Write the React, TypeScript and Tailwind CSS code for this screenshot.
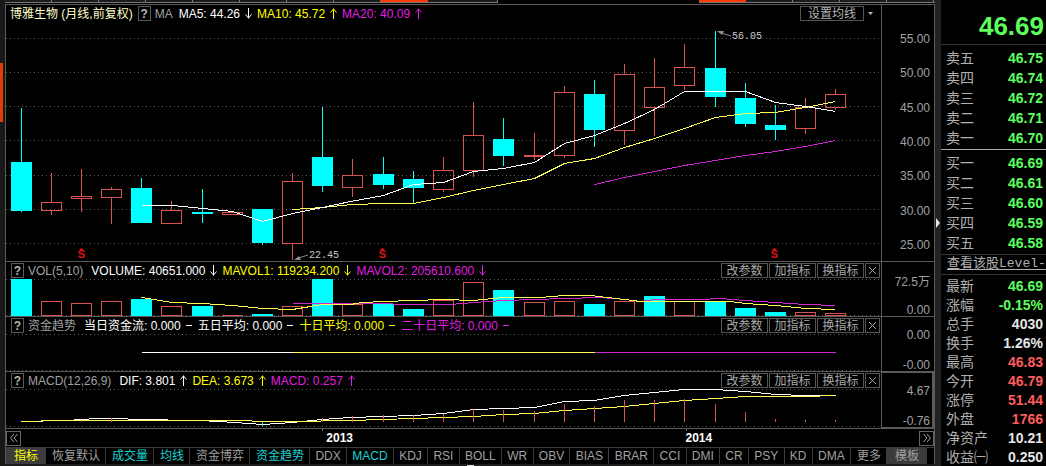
import type { ReactNode } from "react";

type Bar = {
  x: number;
  high: number;
  top: number;
  bottom: number;
  low: number;
  up: boolean;
  vol: number;
  volUp: boolean;
};

const RED = "#d9534f";
const CYAN = "#00ffff";
const WHITE = "#ffffff";
const YELLOW = "#ffff54";
const PURPLE = "#d028d0";

const PLOT_LEFT = 6;
const PLOT_WIDTH = 875;

const pct = (x: number) => `${((x - PLOT_LEFT) / PLOT_WIDTH) * 100}%`;

// x, high, body top, body bottom, low, up, volume top, volume up
const raw: [number, number, number, number, number, number, number, number][] = [
  [21, 108, 162, 211, 212, 0, 279, 0],
  [51, 173, 202, 211, 215, 1, 301, 1],
  [81, 169, 196, 199, 212, 1, 303, 1],
  [111, 187, 189, 198, 224, 1, 301, 1],
  [141, 178, 188, 223, 223, 0, 299, 0],
  [171, 201, 210, 224, 224, 1, 306, 1],
  [202, 189, 212, 214, 223, 0, 306, 0],
  [232, 212, 212, 215, 215, 1, 315, 1],
  [262, 209, 209, 243, 245, 0, 314, 0],
  [292, 173, 181, 244, 260, 1, 306, 1],
  [322, 107, 157, 186, 192, 0, 279, 0],
  [352, 159, 175, 188, 197, 1, 304, 1],
  [383, 157, 174, 185, 189, 0, 304, 0],
  [413, 171, 179, 188, 203, 0, 309, 0],
  [443, 157, 170, 190, 192, 1, 300, 1],
  [473, 102, 135, 171, 177, 1, 282, 1],
  [503, 118, 139, 156, 166, 0, 290, 0],
  [534, 133, 155, 157, 160, 1, 302, 1],
  [564, 86, 92, 156, 158, 1, 301, 1],
  [594, 80, 94, 130, 147, 0, 304, 0],
  [624, 64, 74, 131, 145, 1, 301, 1],
  [654, 58, 87, 108, 136, 1, 296, 0],
  [684, 44, 67, 86, 90, 1, 301, 1],
  [715, 31, 68, 97, 107, 0, 302, 0],
  [745, 83, 98, 124, 127, 0, 308, 0],
  [775, 105, 125, 130, 140, 0, 312, 0],
  [805, 98, 107, 129, 134, 1, 312, 1],
  [835, 89, 94, 108, 110, 1, 313, 1],
];

const bars: Bar[] = raw.map(([x, high, top, bottom, low, up, vol, volUp]) => ({
  x,
  high,
  top,
  bottom,
  low,
  up: up === 1,
  vol,
  volUp: volUp === 1,
}));

const ma5 =
  "141,205 172,205 202,208 232,211 247,216 262,221 292,213 322,207 350,201 383,195 413,184 443,182 473,171 503,168 534,162 564,143 594,135 624,123 654,109 684,91 745,91 775,102 805,106 835,111";
const ma10 =
  "292,209 322,207 352,204 383,203 413,203 443,197 473,190 503,184 534,178 564,163 594,158 624,147 654,138 684,128 715,117 745,113 775,112 805,107 835,101";
const ma20 = "594,184 624,177 654,171 684,165 715,160 745,155 775,151 805,146 835,140";

const mavol1 =
  "141,297 171,302 202,303 232,305 262,308 292,309 322,304 350,304 362,302 383,301 413,300 443,299 473,300 503,297 540,297 564,295 590,295 624,299 640,301 684,301 730,301 745,303 775,305 805,308 835,309";
const mavol2 =
  "292,303 385,303 400,304 450,304 473,302 503,300 534,299 564,298 600,297 624,299 640,301 654,299 700,299 720,298 745,300 775,302 805,304 835,305";

const dif =
  "21,421 66,420 96,418 120,418 134,419 200,420 235,422 262,424 292,422 322,419 350,417 413,415 443,413 473,409 534,407 564,401 594,400 624,395 654,392 684,389 715,389 745,391 775,394 805,395 835,395";
const dea =
  "21,421 60,420 240,420 262,421 292,421 350,420 413,418 473,416 503,414 534,413 564,410 594,408 624,406 654,403 684,400 715,398 745,396 805,396 835,395";

const macdBars: [number, number][] = [
  [81, 420], [111, 418], [322, 418], [352, 416], [383, 415], [413, 415], [443, 414],
  [473, 409], [503, 410], [534, 411], [564, 404], [594, 406], [624, 400], [654, 400],
  [684, 399], [715, 404], [745, 412], [775, 419], [805, 420], [835, 420],
];

const chineseTabs = ["恢复默认", "成交量", "均线", "资金博弈", "资金趋势"];
const indicatorTabs = [
  "DDX", "MACD", "KDJ", "RSI", "BOLL", "WR", "OBV", "BIAS", "BRAR", "CCI", "DMI", "CR", "PSY", "KD", "DMA",
];
const activeTabs = ["成交量", "均线", "资金趋势", "MACD"];

const sells = [
  ["卖五", "46.75"],
  ["卖四", "46.74"],
  ["卖三", "46.72"],
  ["卖二", "46.71"],
  ["卖一", "46.70"],
];
const buys = [
  ["买一", "46.69"],
  ["买二", "46.61"],
  ["买三", "46.60"],
  ["买四", "46.59"],
  ["买五", "46.58"],
];
const stats = [
  ["最新", "46.69", "text-[#5cff5c]"],
  ["涨幅", "-0.15%", "text-[#5cff5c]"],
  ["总手", "4030", "text-[#e6e6e6]"],
  ["换手", "1.26%", "text-[#e6e6e6]"],
  ["最高", "46.83", "text-[#ff5c5c]"],
  ["今开", "46.79", "text-[#ff5c5c]"],
  ["涨停", "51.44", "text-[#ff5c5c]"],
  ["外盘", "1766", "text-[#ff5c5c]"],
  ["净资产", "10.21", "text-[#e6e6e6]"],
  ["收益㈠", "0.250", "text-[#e6e6e6]"],
];

function Arrow({ dir }: { dir: "up" | "down" }) {
  return (
    <svg width="7" height="11" viewBox="0 0 7 11" fill="none" stroke="currentColor" className="-mr-px shrink-0">
      {dir === "up" ? (
        <path d="M3.500 11V0.500M0.500 4.500L3.500 1l3 3.500" />
      ) : (
        <path d="M3.500 0v10.500M0.500 6.500L3.500 10l3-3.500" />
      )}
    </svg>
  );
}

function Dash() {
  return <span className="h-px w-1.5 shrink-0 bg-current" />;
}

function HelpButton() {
  return (
    <button
      type="button"
      aria-label="帮助"
      className="flex h-[15px] w-[13px] shrink-0 items-center justify-center border border-[#5a5a5a] text-xs leading-3 font-bold text-[#b4b4b4]"
    >
      ?
    </button>
  );
}

function Value({ color, text, children }: { color: string; text: string; children: ReactNode }) {
  return (
    <span className={`flex items-center gap-[5px] ${color}`}>
      <span>{text}</span>
      {children}
    </span>
  );
}

function PanelButtons() {
  return (
    <div className="ml-auto flex gap-px pr-px text-[#a8a8a8]">
      {["改参数", "加指标", "换指标"].map((label) => (
        <button
          key={label}
          type="button"
          className="flex h-[15px] w-[47px] items-center justify-center border border-[#555] leading-3"
        >
          {label}
        </button>
      ))}
      <button
        type="button"
        aria-label="关闭"
        className="flex h-[15px] w-[15px] items-center justify-center border border-[#555]"
      >
        <svg width="7" height="7" viewBox="0 0 7 7" stroke="currentColor">
          <path d="M0 0l7 7M7 0L0 7" />
        </svg>
      </button>
    </div>
  );
}

function Plot({ top, height, className, children }: { top: number; height: number; className: string; children: ReactNode }) {
  return (
    <svg
      className={`block w-full ${className}`}
      viewBox={`${PLOT_LEFT} ${top} ${PLOT_WIDTH} ${height}`}
      preserveAspectRatio="none"
      shapeRendering="crispEdges"
      fill="none"
    >
      {children}
    </svg>
  );
}

function GridLine({ y }: { y: number }) {
  return <path d={`M6 ${y + 0.5}H881`} stroke="#5c5c5c" strokeDasharray="1 3" />;
}

function Line({ points, color }: { points: string; color: string }) {
  return <polyline points={points} stroke={color} transform="translate(0.5 0.5)" />;
}

function Axis({ labels, className }: { labels: string[]; className: string }) {
  return (
    <div className={`flex w-[53px] shrink-0 flex-col justify-between text-right leading-3 text-[#a0a0a0] ${className}`}>
      {labels.map((label, i) => (
        <span key={i}>{label}</span>
      ))}
    </div>
  );
}

function PricePlot() {
  return (
    <div className="relative">
      <Plot top={22} height={239} className="h-[239px]">
        {[38, 72, 106, 140, 175, 209, 243].map((y) => (
          <GridLine key={y} y={y} />
        ))}
        {bars.map((b) => {
          const color = b.up ? RED : CYAN;
          const h = b.bottom - b.top;
          return (
            <g key={b.x}>
              <rect x={b.x} y={b.high} width="1" height={b.top - b.high} fill={color} />
              <rect x={b.x} y={b.bottom} width="1" height={b.low - b.bottom} fill={color} />
              {b.up ? (
                <rect x={b.x - 9.5} y={b.top + 0.5} width="20" height={h - 1} stroke={color} />
              ) : (
                <rect x={b.x - 10} y={b.top} width="21" height={h} fill={color} />
              )}
            </g>
          );
        })}
        <Line points={ma20} color={PURPLE} />
        <Line points={ma10} color={YELLOW} />
        <Line points={ma5} color={WHITE} />
        <g shapeRendering="auto">
          <path d="M731 36L720 32.500M308 255L297 258.500" stroke="#8c8c8c" />
          <path d="M717 31l7 0-2 4zM294 260l7 0-2-4z" fill="#8c8c8c" />
        </g>
      </Plot>
      <span className="absolute top-[9px] font-['Liberation_Mono',monospace] text-[10px] leading-3 text-[#c8c8c8]" style={{ left: pct(732) }}>
        56.05
      </span>
      <span className="absolute top-[228px] font-['Liberation_Mono',monospace] text-[10px] leading-3 text-[#c8c8c8]" style={{ left: pct(309) }}>
        22.45
      </span>
      {[78, 379, 771].map((x) => (
        <span
          key={x}
          className="absolute bottom-0.5 flex w-[7px] flex-col items-center text-[11px] leading-[9px] font-bold text-[#e01414]"
          style={{ left: pct(x) }}
        >
          <svg width="5" height="2" viewBox="0 0 5 2" fill="currentColor">
            <path d="M2.500 0L5 2H0z" />
          </svg>
          S
        </span>
      ))}
    </div>
  );
}

function VolumePlot() {
  return (
    <Plot top={279} height={37} className="h-[37px]">
      <GridLine y={279} />
      <GridLine y={315} />
      {bars.map((b) =>
        b.volUp ? (
          <rect key={b.x} x={b.x - 9.5} y={b.vol + 0.5} width="20" height={Math.max(315 - b.vol, 0.1)} stroke={RED} />
        ) : (
          <rect key={b.x} x={b.x - 10} y={b.vol} width="21" height={316 - b.vol} fill={CYAN} />
        )
      )}
      <Line points={mavol2} color={PURPLE} />
      <Line points={mavol1} color={YELLOW} />
    </Plot>
  );
}

function FundPlot() {
  return (
    <Plot top={334} height={37} className="h-[37px]">
      <GridLine y={334} />
      <GridLine y={370} />
      <Line points="141,352 292,352" color={WHITE} />
      <Line points="292,352 594,352" color={YELLOW} />
      <Line points="594,352 835,352" color={PURPLE} />
    </Plot>
  );
}

function MacdPlot() {
  return (
    <Plot top={389} height={39} className="h-[39px]">
      <GridLine y={389} />
      <GridLine y={426} />
      <Line points={dif} color={WHITE} />
      <Line points={dea} color={YELLOW} />
      {macdBars.map(([x, y]) => (
        <rect key={x} x={x} y={y} width="1" height={422 - y} fill={RED} />
      ))}
      <rect x="262" y="422" width="1" height="4" fill={CYAN} />
    </Plot>
  );
}

function Panel({ header, plot, axis }: { header: ReactNode; plot: ReactNode; axis: ReactNode }) {
  return (
    <section className="flex border-b border-[#5a5a5a]">
      <div className="min-w-0 flex-1">
        <div className="flex h-[17px] items-center gap-1.5 overflow-hidden pl-[5px] whitespace-nowrap">{header}</div>
        {plot}
      </div>
      {axis}
    </section>
  );
}

function TopStrip() {
  return (
    <div className="flex h-1 justify-between bg-black">
      <div className="flex h-[3px] w-[493px] border-b border-[#777] bg-[#1c1c1c]">
        {[0, 1, 2, 3, 4, 5, 6, 7].map((i) => (
          <span key={i} className="w-[47px] border-r border-[#777]" />
        ))}
        <span className="w-[47px] bg-[#ff3c00]" />
        <span className="flex-1 border-r border-[#777]" />
      </div>
      <div className="flex h-[3px] w-[236px] border-b border-[#777] bg-[#1c1c1c]">
        <span className="w-[47px] bg-[#ff3c00]" />
        {[0, 1, 2, 3].map((i) => (
          <span key={i} className="w-[47px] border-r border-[#777]" />
        ))}
      </div>
    </div>
  );
}

function Tab({ label, className }: { label: string; className: string }) {
  return (
    <button
      type="button"
      className={`border-r border-[#3c3c3c] pr-[5px] ${className} ${activeTabs.includes(label) ? "text-[#1ed2d2]" : ""}`}
    >
      {label}
    </button>
  );
}

function Quote({ label, value, color, row }: { label: string; value: string; color: string; row: string }) {
  return (
    <tr className={row}>
      <th scope="row" className="p-0 text-left font-normal text-[#b0b0b0]">
        {label}
      </th>
      <td className={`p-0 text-right font-bold ${color}`}>{value}</td>
    </tr>
  );
}

function QuotePanel() {
  return (
    <aside className="w-[105px] shrink-0 overflow-hidden bg-black text-sm whitespace-nowrap">
      <div className="flex h-[45px] items-center justify-end border-b border-[#333] pt-2.5 pr-0.5 text-[26px] font-bold text-[#5cff5c]">
        46.69
      </div>
      <div className="border-b border-[#aaa] pt-[3px] pr-[3px] pb-px pl-[5px]">
        <table className="w-full">
          <tbody>
            {sells.map(([label, value]) => (
              <Quote key={label} label={label} value={value} color="text-[#5cff5c]" row="h-5 leading-5" />
            ))}
          </tbody>
        </table>
      </div>
      <div className="border-b border-[#333] pt-[3px] pr-[3px] pb-px pl-[5px]">
        <table className="w-full">
          <tbody>
            {buys.map(([label, value]) => (
              <Quote key={label} label={label} value={value} color="text-[#5cff5c]" row="h-5 leading-5" />
            ))}
          </tbody>
        </table>
      </div>
      <div className="h-5 overflow-hidden border-b border-[#333] pt-px pl-1.5">
        <a
          href="#level2"
          className="block font-['Liberation_Mono','Noto_Sans_CJK_SC',monospace] text-[13px] leading-4 text-[#b0b0b0] underline underline-offset-2"
        >
          查看该股Level-
        </a>
      </div>
      <div className="pt-0.5 pr-[3px] pl-[5px]">
        <table className="w-full">
          <tbody>
            {stats.map(([label, value, color]) => (
              <Quote key={label} label={label} value={value} color={color} row="h-[19px] leading-[19px]" />
            ))}
          </tbody>
        </table>
      </div>
    </aside>
  );
}

export default function App() {
  return (
    <div className="flex h-screen overflow-hidden bg-black font-['Liberation_Sans','Noto_Sans_CJK_SC',sans-serif] text-xs">
      <div className="flex w-[5px] shrink-0 flex-col bg-[#181818] pt-[63px] pr-0.5">
        <div className="h-[59px] bg-[#e63c0a]" />
      </div>

      <div className="flex min-w-0 flex-1 flex-col">
        <TopStrip />
        <main className="border-x border-t border-[#5a5a5a]">
          <Panel
            header={
              <>
                <div className="-mr-0.5 -ml-px flex items-center gap-[5px]">
                  <h1 className="text-[#ffffc8]">博雅生物 (月线,前复权)</h1>
                  <HelpButton />
                </div>
                <span className="text-[#a0a0a0]">MA</span>
                <Value color="text-white" text="MA5: 44.26">
                  <Arrow dir="down" />
                </Value>
                <Value color="text-[#ffff00]" text="MA10: 45.72">
                  <Arrow dir="up" />
                </Value>
                <Value color="text-[#e01ee0]" text="MA20: 40.09">
                  <Arrow dir="up" />
                </Value>
                <div className="ml-auto flex items-center gap-1 pr-2 text-[#b4b4b4]">
                  <button type="button" className="flex h-[15px] w-16 items-center justify-center border border-[#555] leading-3">
                    设置均线
                  </button>
                  <svg width="5" height="3" viewBox="0 0 5 3" fill="currentColor">
                    <path d="M0 0h5L2.500 3z" />
                  </svg>
                </div>
              </>
            }
            plot={<PricePlot />}
            axis={
              <Axis
                className="border-l border-[#5a5a5a] pt-7 pr-1 pb-2.5"
                labels={["55.00", "50.00", "45.00", "40.00", "35.00", "30.00", "25.00"]}
              />
            }
          />
          <Panel
            header={
              <>
                <HelpButton />
                <span className="-ml-0.5 pr-0.5 text-[#a0a0a0]">VOL(5,10)</span>
                <Value color="text-white" text="VOLUME: 40651.000">
                  <Arrow dir="down" />
                </Value>
                <Value color="text-[#ffff00]" text="MAVOL1: 119234.200">
                  <Arrow dir="down" />
                </Value>
                <Value color="text-[#e01ee0]" text="MAVOL2: 205610.600">
                  <Arrow dir="down" />
                </Value>
                <PanelButtons />
              </>
            }
            plot={<VolumePlot />}
            axis={<Axis className="border-l border-[#5a5a5a] pt-3.5 pr-1" labels={["72.5万", "0.00"]} />}
          />
          <Panel
            header={
              <>
                <HelpButton />
                <span className="-ml-0.5 pr-0.5 text-[#a0a0a0]">资金趋势</span>
                <Value color="text-white" text="当日资金流: 0.000">
                  <Dash />
                </Value>
                <Value color="text-white" text="五日平均: 0.000">
                  <Dash />
                </Value>
                <Value color="text-[#ffff00]" text="十日平均: 0.000">
                  <Dash />
                </Value>
                <Value color="text-[#e01ee0]" text="二十日平均: 0.000">
                  <Dash />
                </Value>
                <PanelButtons />
              </>
            }
            plot={<FundPlot />}
            axis={<Axis className="border-l border-[#5a5a5a] pt-3 pr-1" labels={["0.00", "-0.00"]} />}
          />
          <Panel
            header={
              <>
                <HelpButton />
                <span className="-ml-0.5 pr-0.5 text-[#a0a0a0]">MACD(12,26,9)</span>
                <Value color="text-white" text="DIF: 3.801">
                  <Arrow dir="up" />
                </Value>
                <Value color="text-[#ffff00]" text="DEA: 3.673">
                  <Arrow dir="up" />
                </Value>
                <Value color="text-[#e01ee0]" text="MACD: 0.257">
                  <Arrow dir="up" />
                </Value>
                <PanelButtons />
              </>
            }
            plot={<MacdPlot />}
            axis={<Axis className="border border-r-2 border-[#5a5a5a] pt-3 pr-0.5" labels={["4.67", "-0.76"]} />}
          />

          <div className="flex h-[18px] items-center">
            <button
              type="button"
              aria-label="向左"
              className="flex h-[15px] w-[15px] items-center justify-center border border-[#666] text-[#a0a0a0]"
            >
              <svg width="8" height="8" viewBox="0 0 8 8" fill="none" stroke="currentColor">
                <path d="M4 0L0.500 4L4 8M7.500 0L4 4l3.500 4" />
              </svg>
            </button>
            <div className="relative h-full flex-1 font-bold text-white">
              <span className="absolute top-0 left-[33.5%] h-0.5 w-px bg-[#777]" />
              <span className="absolute top-px left-[34%] leading-4">2013</span>
              <span className="absolute top-0 left-[74%] h-0.5 w-px bg-[#777]" />
              <span className="absolute top-px left-[74%] leading-4">2014</span>
            </div>
            <button
              type="button"
              aria-label="向右"
              className="flex h-[15px] w-[15px] items-center justify-center border border-[#666] text-[#a0a0a0]"
            >
              <svg width="8" height="8" viewBox="0 0 8 8" fill="none" stroke="currentColor">
                <path d="M0.500 0L4 4L0.500 8M4 0l3.500 4L4 8" />
              </svg>
            </button>
          </div>

          <nav className="flex h-[17px] overflow-hidden border-t border-[#3c3c3c] pr-[7px] leading-4 whitespace-nowrap text-[#a0a0a0]">
            <button type="button" className="bg-[#3c3c3c] px-2 text-[#ffff00]">
              指标
            </button>
            {chineseTabs.map((tab) => (
              <Tab key={tab} label={tab} className="pl-1.5" />
            ))}
            {indicatorTabs.map((tab) => (
              <Tab key={tab} label={tab} className="grow pl-[5px]" />
            ))}
            <Tab label="更多" className="pl-1.5" />
            <button type="button" className="bg-[#3c3c3c] px-2">
              模板
            </button>
          </nav>
        </main>
        <div className="flex flex-1 items-end justify-center bg-[#1c1c1c]">
          <span className="h-px w-[7px] bg-[#ddd]" />
        </div>
      </div>

      <div className="flex w-1.5 shrink-0 flex-col bg-[#222] pt-[218px]">
        <svg width="5" height="10" viewBox="0 0 5 10" fill="#e6e6e6">
          <path d="M1 0l4 5-4 5z" />
        </svg>
      </div>

      <QuotePanel />
    </div>
  );
}
